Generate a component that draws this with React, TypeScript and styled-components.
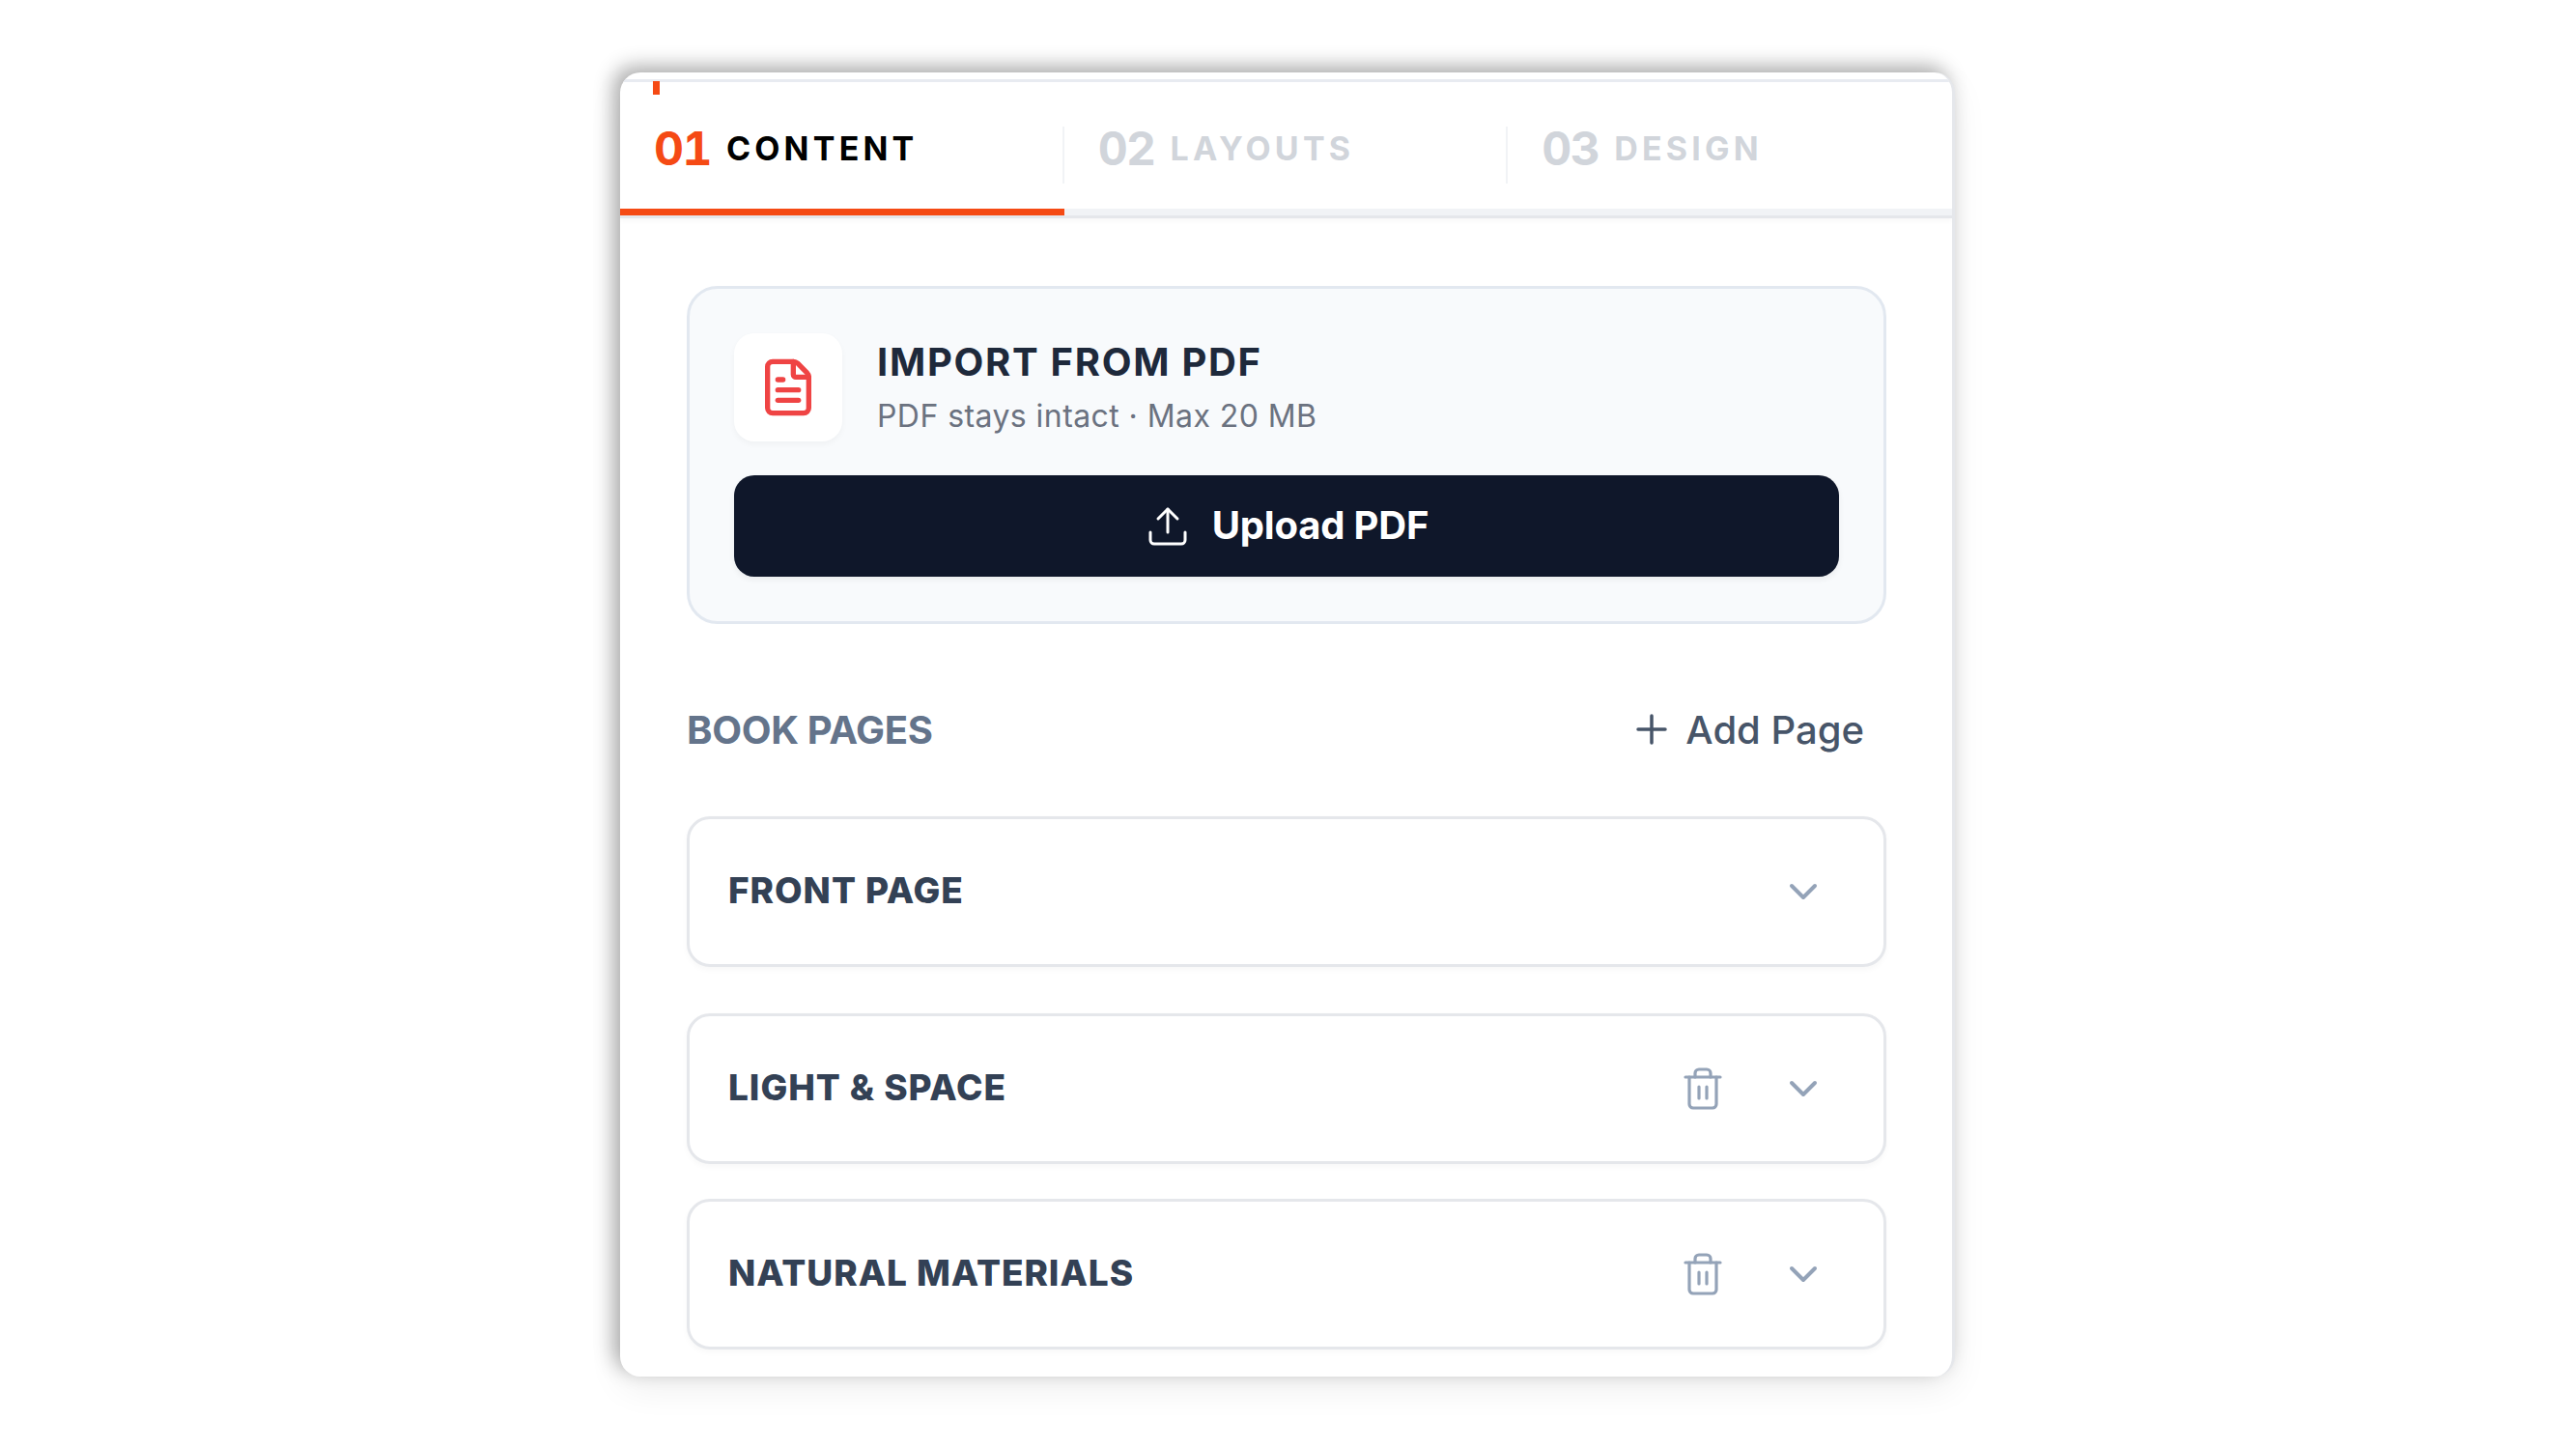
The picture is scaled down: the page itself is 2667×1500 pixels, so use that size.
import styled, { createGlobalStyle } from 'styled-components';
import { ChevronDown, FileText, Plus, Trash2, Upload } from 'lucide-react';

const GlobalStyle = createGlobalStyle`
  html, body {
    margin: 0;
    background: #ffffff;
    font-family: Inter, "Liberation Sans", sans-serif;
  }
  * {
    box-sizing: border-box;
  }
`;

const tabs = [
  { num: '01', label: 'CONTENT', active: true },
  { num: '02', label: 'LAYOUTS', active: false },
  { num: '03', label: 'DESIGN', active: false },
];

const pages = [
  { title: 'FRONT PAGE', removable: false, gap: 0 },
  { title: 'LIGHT & SPACE', removable: true, gap: 48 },
  { title: 'NATURAL MATERIALS', removable: true, gap: 36 },
];

export default function App() {
  return (
    <>
      <GlobalStyle />
      <Page>
        <Panel>
          <TabBar>
            <ActiveTick />
            {tabs.map((tab, i) => (
              <Tab key={tab.num} $active={tab.active}>
                <TabInner $divider={i < tabs.length - 1}>
                  <TabNum $active={tab.active}>{tab.num}</TabNum>
                  <TabLabel $active={tab.active}>{tab.label}</TabLabel>
                </TabInner>
              </Tab>
            ))}
          </TabBar>
          <Body>
            <ImportCard>
              <ImportHeader>
                <IconBox>
                  <FileText size={64} color="#ef4444" />
                </IconBox>
                <ImportText>
                  <ImportTitle>IMPORT FROM PDF</ImportTitle>
                  <ImportSub>PDF stays intact · Max 20 MB</ImportSub>
                </ImportText>
              </ImportHeader>
              <UploadButton>
                <Upload size={48} strokeWidth={1.5} />
                <UploadLabel>Upload PDF</UploadLabel>
              </UploadButton>
            </ImportCard>
            <SectionHeader>
              <SectionTitle>BOOK PAGES</SectionTitle>
              <AddPage>
                <Plus size={48} strokeWidth={1.75} />
                Add Page
              </AddPage>
            </SectionHeader>
            {pages.map((page) => (
              <PageCard key={page.title} $gap={page.gap}>
                <PageTitle>{page.title}</PageTitle>
                <PageActions>
                  {page.removable && <Trash2 size={48} strokeWidth={1.6} color="#94a3b8" />}
                  <ChevronDown size={48} color="#94a3b8" />
                </PageActions>
              </PageCard>
            ))}
          </Body>
        </Panel>
      </Page>
    </>
  );
}

const Page = styled.div`
  min-height: 1500px;
  padding: 75px 0 0 642px;
`;

const Panel = styled.div`
  width: 1382px;
  height: 1350px;
  background: #ffffff;
  border-right: 3px solid #e5e7eb;
  border-radius: 21px;
  padding-top: 7px;
  overflow: hidden;
  box-shadow: -7px -7px 20px rgba(0, 0, 0, 0.3), 0 12px 36px rgba(0, 0, 0, 0.07);
`;

const TabBar = styled.div`
  position: relative;
  display: flex;
  border-top: 3px solid #e8ebf1;
  border-bottom: 3px solid #e5e7eb;
  box-shadow: 0 3px 5px rgba(0, 0, 0, 0.03);
`;

const ActiveTick = styled.div`
  position: absolute;
  left: 34px;
  top: -1px;
  width: 7px;
  height: 14px;
  background: #f54a14;
`;

const Tab = styled.div<{ $active: boolean }>`
  flex: 1;
  height: 138px;
  padding-top: 46px;
  border-bottom: 7px solid ${({ $active }) => ($active ? '#f54a14' : '#f1f3f6')};
`;

const TabInner = styled.div<{ $divider: boolean }>`
  display: flex;
  align-items: center;
  gap: 16px;
  height: 59px;
  padding: 0 0 14px 35px;
  border-right: 2px solid ${({ $divider }) => ($divider ? '#f1f3f6' : 'transparent')};
`;

const TabNum = styled.span<{ $active: boolean }>`
  font-size: 48px;
  line-height: 48px;
  font-weight: 700;
  font-variant-numeric: tabular-nums;
  letter-spacing: -1.6px;
  color: ${({ $active }) => ($active ? '#f54a14' : '#d1d5db')};
`;

const TabLabel = styled.span<{ $active: boolean }>`
  font-size: 34px;
  line-height: 40px;
  font-weight: 700;
  letter-spacing: 4.2px;
  color: ${({ $active }) => ($active ? '#000000' : '#d1d5db')};
`;

const Body = styled.div`
  padding: 70px 68px 0 69px;
`;

const ImportCard = styled.div`
  height: 350px;
  padding: 46px;
  background: #f8fafc;
  border: 3px solid #e2e8f0;
  border-radius: 32px;
`;

const ImportHeader = styled.div`
  display: flex;
  align-items: center;
  gap: 36px;
`;

const IconBox = styled.div`
  display: flex;
  align-items: center;
  justify-content: center;
  width: 112px;
  height: 112px;
  background: #ffffff;
  border-radius: 21px;
  box-shadow: 0 3px 6px rgba(0, 0, 0, 0.04);
`;

const ImportText = styled.div`
  display: flex;
  flex-direction: column;
  gap: 4px;
`;

const ImportTitle = styled.div`
  font-size: 40px;
  line-height: 56px;
  font-weight: 700;
  letter-spacing: 1.7px;
  color: #1e293b;
`;

const ImportSub = styled.div`
  font-size: 32px;
  line-height: 48px;
  letter-spacing: 0.43px;
  color: #6b7280;
`;

const UploadButton = styled.div`
  display: flex;
  align-items: center;
  justify-content: center;
  gap: 22px;
  height: 105px;
  margin-top: 35px;
  background: #0f172a;
  border-radius: 21px;
  color: #ffffff;
  box-shadow: 0 3px 6px rgba(0, 0, 0, 0.06);
`;

const UploadLabel = styled.span`
  font-size: 40px;
  font-weight: 700;
  letter-spacing: -0.2px;
  padding-bottom: 2px;
`;

const SectionHeader = styled.div`
  display: flex;
  align-items: center;
  justify-content: space-between;
  height: 64px;
  margin: 77px 0 58px;
  padding-right: 23px;
`;

const SectionTitle = styled.div`
  font-size: 40px;
  font-weight: 700;
  letter-spacing: -0.3px;
  color: #64748b;
`;

const AddPage = styled.div`
  display: flex;
  align-items: center;
  gap: 11px;
  font-size: 40px;
  font-weight: 500;
  color: #475569;
`;

const PageCard = styled.div<{ $gap: number }>`
  display: flex;
  align-items: center;
  justify-content: space-between;
  height: 156px;
  margin-top: ${({ $gap }) => $gap}px;
  padding: 0 59px 0 40px;
  background: #ffffff;
  border: 3px solid #e5e7eb;
  border-radius: 24px;
  box-shadow: 0 3px 6px rgba(0, 0, 0, 0.03);
`;

const PageTitle = styled.div`
  font-size: 37px;
  font-weight: 800;
  letter-spacing: 0.95px;
  color: #334155;
  padding-bottom: 4px;
`;

const PageActions = styled.div`
  display: flex;
  align-items: center;
  gap: 56px;
`;
